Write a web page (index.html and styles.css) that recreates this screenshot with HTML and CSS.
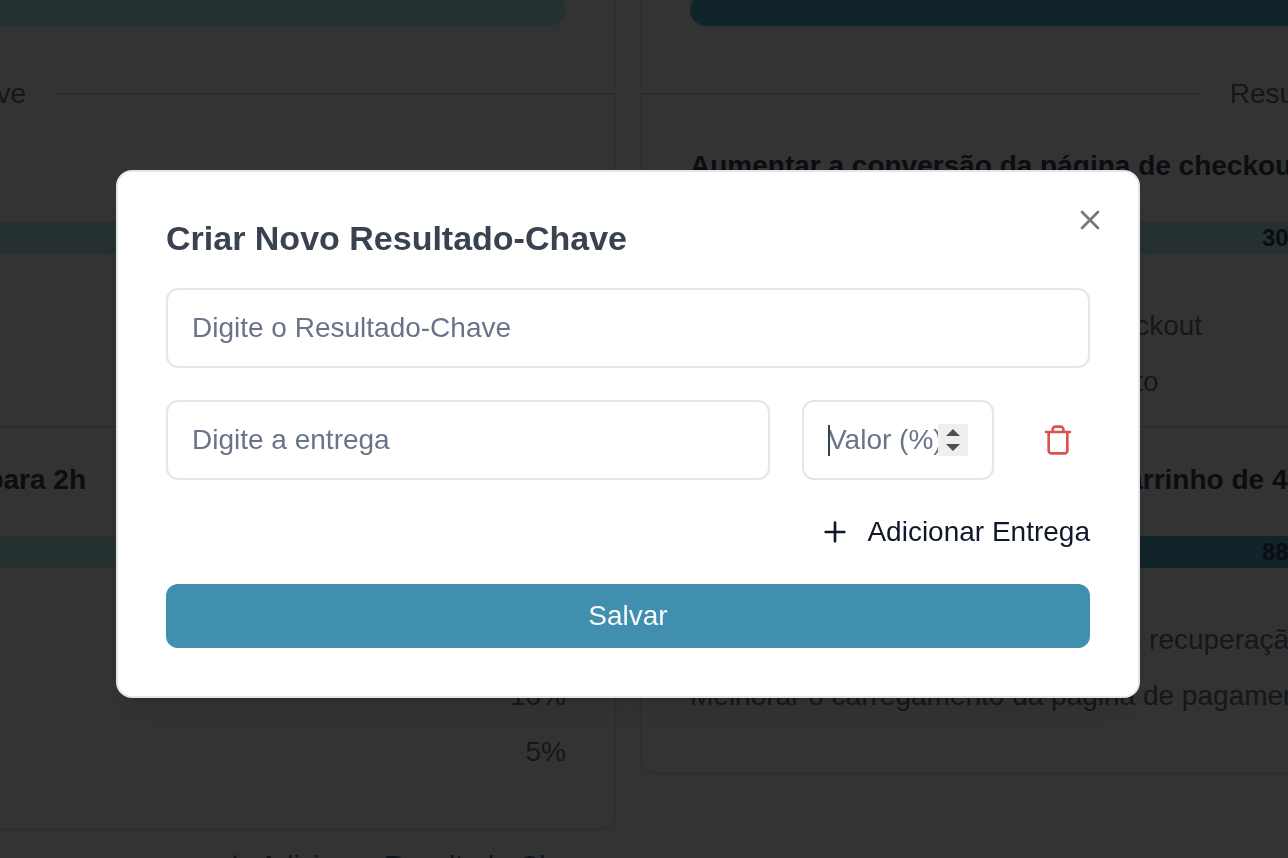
FILE: index.html
```html
<!DOCTYPE html>
<html lang="pt-BR">
<head>
<meta charset="utf-8">
<meta name="viewport" content="width=device-width, initial-scale=1">
<title>Criar Novo Resultado-Chave</title>
<link rel="stylesheet" href="styles.css">
</head>
<body>
<div class="page">
  <main class="board" inert>
    <div class="column">
      <section class="card">
        <div class="bar bar-round bar-light"></div>
        <div class="separator"><span>Resultado-Chave</span></div>
        <article class="result">
          <h3 class="result-title"></h3>
          <div class="bar bar-result bar-light"></div>
          <ul class="deliveries deliveries-two"></ul>
        </article>
        <article class="result">
          <h3 class="result-title result-title-end">para 2h</h3>
          <div class="bar bar-result bar-light"></div>
          <ul class="deliveries deliveries-three">
            <li class="share">10%</li>
            <li class="share">5%</li>
          </ul>
        </article>
      </section>
      <button class="add add-result" type="button">
        <svg class="icon" viewBox="0 0 24 24"><path d="M5 12h14M12 5v14"/></svg>
        Adicionar Resultado-Chave
      </button>
    </div>
    <div class="column">
      <section class="card">
        <div class="bar bar-round bar-dark"></div>
        <div class="separator"><span>Resultado-Chave</span></div>
        <article class="result">
          <h3 class="result-title">Aumentar a conversão da página de checkout</h3>
          <div class="bar bar-result bar-light">30%</div>
          <ul class="deliveries">
            <li>Reduzir o número de etapas do checkout</li>
            <li>Adicionar mais opções de pagamento</li>
          </ul>
        </article>
        <article class="result">
          <h3 class="result-title">Reduzir a taxa de abandono do carrinho de 40%</h3>
          <div class="bar bar-result bar-dark">88%</div>
          <ul class="deliveries">
            <li>Implementar e-mails automáticos de recuperação</li>
            <li>Melhorar o carregamento da página de pagamento</li>
          </ul>
        </article>
      </section>
    </div>
  </main>

  <div class="overlay">
    <form class="dialog" role="dialog" aria-modal="true" aria-labelledby="dialog-title">
      <h2 class="dialog-title" id="dialog-title">Criar Novo Resultado-Chave</h2>
      <input class="field" type="text" placeholder="Digite o Resultado-Chave" aria-label="Resultado-Chave">
      <div class="delivery-row">
        <input class="field" type="text" placeholder="Digite a entrega" aria-label="Entrega">
        <div class="value">
          <input class="field field-value" type="number" placeholder="Valor (%)" aria-label="Valor (%)">
          <span class="caret"></span>
        </div>
        <button class="remove" type="button" aria-label="Remover entrega">
          <svg class="icon" viewBox="0 0 24 24"><path d="M3 6h18M19 6v14c0 1-1 2-2 2H7c-1 0-2-1-2-2V6M8 6V4c0-1 1-2 2-2h4c1 0 2 1 2 2v2"/></svg>
        </button>
      </div>
      <button class="add" type="button">
        <svg class="icon" viewBox="0 0 24 24"><path d="M5 12h14M12 5v14"/></svg>
        Adicionar Entrega
      </button>
      <button class="save" type="submit">Salvar</button>
      <button class="close" type="button" aria-label="Fechar">
        <svg class="icon" viewBox="0 0 24 24"><path d="M18 6 6 18M6 6l12 12"/></svg>
      </button>
    </form>
  </div>
</div>
</body>
</html>
```
FILE: styles.css
```css
* {
  box-sizing: border-box;
  margin: 0;
}

body {
  background: #fff;
  color: #374151;
  font-family: "Liberation Sans", Arial, sans-serif;
  font-size: 28px;
  line-height: 40px;
}

button,
input {
  font: inherit;
}

button {
  padding: 0;
  border: 0;
  background: none;
  cursor: pointer;
}

.icon {
  display: block;
  width: 32px;
  height: 32px;
  fill: none;
  stroke: currentColor;
  stroke-width: 2;
  stroke-linecap: round;
  stroke-linejoin: round;
}

.page {
  height: 100vh;
  overflow: hidden;
}

/* Board of objectives, scrolled behind the dialog */
.board {
  display: flex;
  justify-content: center;
  align-items: flex-start;
  gap: 24px;
  margin-top: -6px;
  padding-right: 32px;
}

.column {
  display: flex;
  flex: none;
  flex-direction: column;
  align-items: flex-end;
  gap: 16px;
  width: 1396px;
}

.card {
  width: 100%;
  padding-bottom: 56px;
  border: 2px solid #e2e8f0;
  border-top: 0;
  border-radius: 0 0 16px 16px;
  box-shadow: 0 2px 4px rgba(0, 0, 0, 0.05);
}

.bar {
  height: 32px;
  font-size: 24px;
  font-weight: 700;
  line-height: 32px;
  text-align: center;
}

.bar-round {
  margin: 0 48px;
  border-radius: 16px;
}

.bar-result {
  margin: 36px 152px 52px 48px;
}

.bar-light {
  background: #b9eef2;
}

.bar-dark {
  background: #58b4cc;
}

.separator {
  display: flex;
  align-items: center;
  gap: 32px;
  margin-top: 48px;
  color: #6b7280;
}

.separator::before,
.separator::after {
  flex: 1;
  height: 2px;
  background: #d5dae4;
  content: "";
}

.result {
  padding-top: 32px;
}

.result + .result {
  margin-top: 24px;
  border-top: 2px solid #d9dce2;
}

.result-title {
  min-height: 40px;
  padding-left: 48px;
  font-size: 28px;
}

.result-title-end {
  width: 864px;
  text-align: right;
}

.deliveries {
  display: flex;
  flex-direction: column;
  justify-content: flex-end;
  gap: 16px;
  padding: 0 48px;
  color: #6b7280;
  list-style: none;
}

.deliveries-two {
  min-height: 96px;
}

.deliveries-three {
  min-height: 152px;
}

.share {
  text-align: right;
}

.overlay {
  position: fixed;
  inset: 0;
  display: grid;
  place-items: center;
  padding: 10px 32px 0 0;
  background: rgba(0, 0, 0, 0.8);
}

.dialog {
  position: relative;
  display: flex;
  flex-direction: column;
  gap: 32px;
  width: 100%;
  max-width: 1024px;
  padding: 48px;
  border: 2px solid #e2e6ec;
  border-radius: 16px;
  background: #fff;
  box-shadow: 0 20px 30px -6px rgba(0, 0, 0, 0.1), 0 8px 12px -8px rgba(0, 0, 0, 0.1);
}

.dialog-title {
  color: #3a4151;
  font-size: 34px;
  line-height: 36px;
}

.field {
  display: block;
  flex: 1;
  width: 100%;
  min-width: 0;
  min-height: 80px;
  padding: 16px 24px;
  border: 2px solid #e2e6ec;
  border-radius: 12px;
  outline: 0;
  background: #fff;
  color: #334155;
}

.field::placeholder {
  color: #6a7489;
  opacity: 1;
}

.delivery-row {
  display: flex;
  gap: 32px;
}

.value {
  position: relative;
  width: 192px;
}

.field-value {
  caret-color: transparent;
}

.field-value::-webkit-inner-spin-button {
  width: 30px;
  height: 32px;
  margin: 4px 0;
  background: #efefef url("data:image/svg+xml,%3Csvg xmlns='http://www.w3.org/2000/svg' viewBox='0 0 30 32'%3E%3Cpath d='M8 12 15 5l7 7zM8 20h14l-7 7z' fill='%23505050'/%3E%3C/svg%3E") center / 30px 32px no-repeat;
  opacity: 1;
  -webkit-appearance: none;
  appearance: none;
}

.caret {
  position: absolute;
  top: 25px;
  left: 26px;
  width: 2px;
  height: 31px;
  background: #334155;
}

.remove {
  display: grid;
  place-items: center;
  width: 64px;
  color: #d9534f;
}

.add {
  display: flex;
  align-items: center;
  align-self: flex-end;
  gap: 16px;
  color: #0f172a;
}

.add-result {
  gap: 8px;
  margin-right: 16px;
  color: #4a6a90;
}

.save {
  min-height: 64px;
  border-radius: 12px;
  background: #408fae;
  color: #f8fafc;
}

.close {
  position: absolute;
  top: 32px;
  right: 32px;
  color: #737780;
}
```
